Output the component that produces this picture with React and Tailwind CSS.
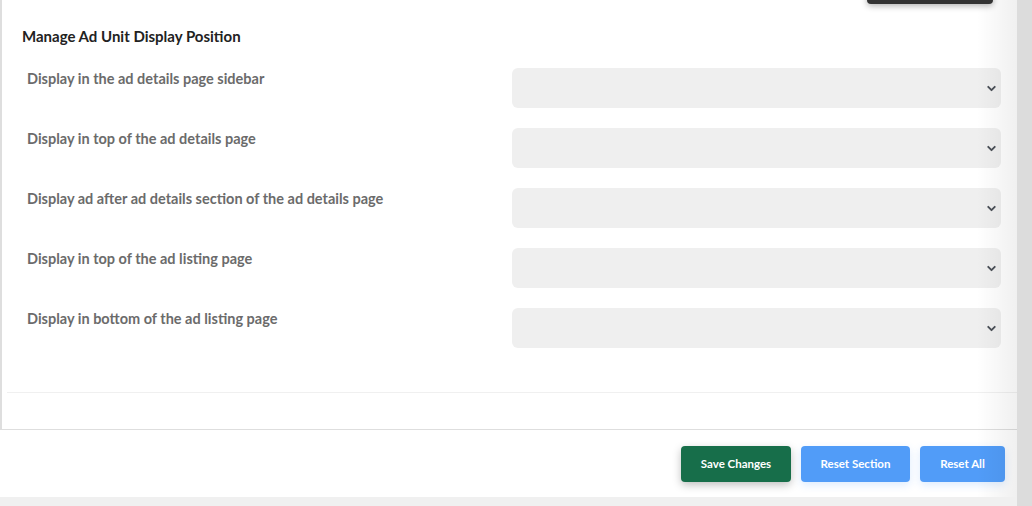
import { ChevronDown } from "lucide-react";

const positions = [
  "Display in the ad details page sidebar",
  "Display in top of the ad details page",
  "Display ad after ad details section of the ad details page",
  "Display in top of the ad listing page",
  "Display in bottom of the ad listing page",
];

const SelectRow = ({ label }) => (
  <div className="flex h-[60px] items-start">
    <label className="w-[490px] shrink-0 pl-[5px] pt-[1px] text-[14.5px] font-bold leading-[20px] text-[#6b6b6b]">
      {label}
    </label>
    <div className="flex h-[40px] w-[489px] items-center justify-end rounded-[6px] bg-[#efefef] pr-[3px]">
      <ChevronDown size={13} strokeWidth={3.5} className="text-[#4a4f57]" />
    </div>
  </div>
);

export default function App() {
  return (
    <div
      className="relative flex h-[506px] w-[1032px] overflow-hidden bg-[#f0f0f0]"
      style={{ fontFamily: "Lato, 'Noto Sans', sans-serif" }}
    >
      <div className="relative flex w-[1017px] flex-col">
        <div className="h-[430px] border-b border-l-2 border-[#dedede] bg-white">
          <div className="ml-[5px] h-[393px] border-b border-[#f0f0f0] pl-[15px] pt-[26px]">
            <h3 className="mb-[22px] text-[15px] font-bold leading-[20px] text-[#222]">
              Manage Ad Unit Display Position
            </h3>
            <div className="flex flex-col">
              {positions.map((p) => (
                <SelectRow key={p} label={p} />
              ))}
            </div>
          </div>
        </div>
        <div className="flex h-[67px] items-center justify-end gap-[10px] bg-white pr-[12px]">
          <button className="h-[36px] w-[110px] rounded-[4px] bg-[#176e4a] text-[11.5px] font-bold text-white shadow-[0_3px_8px_rgba(0,0,0,0.25)]">
            Save Changes
          </button>
          <button className="h-[36px] w-[109px] rounded-[4px] bg-[#519cf8] text-[11.5px] font-bold text-white shadow-[0_3px_8px_rgba(81,156,248,0.2)]">
            Reset Section
          </button>
          <button className="h-[36px] w-[85px] rounded-[4px] bg-[#519cf8] text-[11.5px] font-bold text-white shadow-[0_3px_8px_rgba(81,156,248,0.2)]">
            Reset All
          </button>
        </div>
        <div className="pointer-events-none absolute right-0 top-0 h-[497px] w-[40px] bg-gradient-to-r from-transparent to-black/[0.06]" />
        <div className="absolute left-[867px] top-[-8px] h-[12px] w-[126px] rounded-[4px] bg-[#333] shadow-[0_2px_6px_rgba(0,0,0,0.3)]" />
      </div>
      <div className="w-[15px] bg-[#dcdcdc]" />
    </div>
  );
}
